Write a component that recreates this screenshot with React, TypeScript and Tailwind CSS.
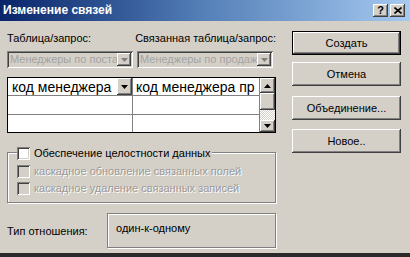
const raised =
  'shadow-[inset_-1px_-1px_#404040,inset_1px_1px_#ffffff,inset_-2px_-2px_#808080,inset_2px_2px_#d4d0c8]';
const sunken =
  'shadow-[inset_1px_1px_#808080,inset_-1px_-1px_#ffffff,inset_2px_2px_#404040,inset_-2px_-2px_#d4d0c8]';
const etched = 'border border-[#808080] shadow-[1px_1px_#ffffff,inset_1px_1px_#ffffff]';

function Arrow({ up = false, gray = false }: { up?: boolean; gray?: boolean }) {
  return (
    <svg width="7" height="4" viewBox="0 0 7 4" className={up ? 'rotate-180' : ''}>
      <path d="M0 0h7L3.5 4z" fill={gray ? '#808080' : '#000'} />
    </svg>
  );
}

function DropButton({ gray = false, className = '' }: { gray?: boolean; className?: string }) {
  return (
    <div className={`flex items-center justify-center bg-[#d4d0c8] ${raised} ${className}`}>
      <Arrow gray={gray} />
    </div>
  );
}

function Combo({ text, width }: { text: string; width: string }) {
  return (
    <div className={`flex h-[17px] ${width} p-[2px] bg-[#d4d0c8] ${sunken}`}>
      <div className="flex-1 overflow-hidden whitespace-nowrap pl-[1px] text-[11px] leading-[13px] text-[#a3a3a3]">
        {text}
      </div>
      <DropButton gray className="w-[14px] h-[13px]" />
    </div>
  );
}

function DialogButton({ label, isDefault = false }: { label: string; isDefault?: boolean }) {
  return (
    <div className={`h-[24px] ${isDefault ? 'border border-black' : ''}`}>
      <div className={`flex h-full items-center justify-center ${raised} text-[11px]`}>{label}</div>
    </div>
  );
}

function Check({ label, disabled = false }: { label: string; disabled?: boolean }) {
  return (
    <div className="flex items-center h-[14px] gap-[4px]">
      <div className={`w-[13px] h-[13px] shrink-0 ${disabled ? 'bg-[#d4d0c8]' : 'bg-white'} ${sunken}`} />
      <span
        className={`text-[11px] leading-[14px] whitespace-nowrap ${
          disabled ? 'text-[#9a9a9a] [text-shadow:1px_1px_#ffffff]' : 'text-black'
        }`}
      >
        {label}
      </span>
    </div>
  );
}

export default function App() {
  return (
    <div className="w-[410px] h-[257px] bg-[#d4d0c8] font-['Liberation_Sans',Arial,sans-serif] text-black flex flex-col overflow-hidden border-b-[4px] border-[#2a2a2a]">
      {/* title bar */}
      <div className="h-[21px] shrink-0 flex items-center justify-between pl-[3px] pr-[5px] bg-gradient-to-r from-[#0a246a] via-[#5580b8] to-[#a6caf0]">
        <span className="text-white font-bold text-[12px] leading-[15px]">Изменение связей</span>
        <div className="flex gap-[2px]">
          <div className={`w-[15px] h-[13px] bg-[#d4d0c8] ${raised} flex items-center justify-center text-[11px] font-bold leading-none`}>
            ?
          </div>
          <div className={`w-[15px] h-[13px] bg-[#d4d0c8] ${raised} flex items-center justify-center`}>
            <svg width="8" height="7" viewBox="0 0 8 7">
              <path d="M0.5 0.5l7 6M7.5 0.5l-7 6" stroke="#000" strokeWidth="1.6" />
            </svg>
          </div>
        </div>
      </div>

      <div className="flex flex-1 pl-[7px]">
        {/* left column */}
        <div className="w-[269px] flex flex-col">
          <div className="flex mt-[11px] h-[13px] text-[11px] leading-[13px] whitespace-nowrap">
            <span className="w-[129px]">Таблица/запрос:</span>
            <span>Связанная таблица/запрос:</span>
          </div>
          <div className="flex mt-[6px] gap-[4px]">
            <Combo text="Менеджеры по поставкам" width="w-[126px]" />
            <Combo text="Менеджеры по продажам" width="w-[136px]" />
          </div>

          {/* field grid */}
          <div className="mt-[9px] h-[56px] border border-black flex bg-white">
            <div className="flex-1 grid grid-cols-[125px_1fr] grid-rows-[18px_19px_17px] text-[14px] leading-[18px]">
              <div className="flex border-r border-b border-[#808080] pl-[4px]">
                <span className="flex-1 whitespace-nowrap overflow-hidden">код менеджера</span>
                <DropButton className="w-[15px] h-[17px]" />
              </div>
              <div className="border-b border-[#808080] pl-[3px] whitespace-nowrap overflow-hidden">код менеджера пр</div>
              <div className="border-r border-b border-[#808080]" />
              <div className="border-b border-[#808080]" />
              <div className="border-r border-[#808080]" />
              <div />
            </div>
            <div className="w-[16px] flex flex-col border-l border-[#808080]">
              <div className={`h-[15px] bg-[#d4d0c8] ${raised} flex items-center justify-center`}>
                <Arrow up />
              </div>
              <div className={`h-[17px] bg-[#d4d0c8] ${raised}`} />
              <div className="flex-1 bg-[repeating-conic-gradient(#d4d0c8_0_25%,#ffffff_0_50%)] bg-[length:2px_2px]" />
              <div className={`h-[12px] bg-[#d4d0c8] ${raised} flex items-center justify-center`}>
                <Arrow />
              </div>
            </div>
          </div>

          {/* integrity group */}
          <div className={`mt-[19px] h-[51px] ${etched} pl-[9px] flex flex-col`}>
            <div className="-mt-[7px] bg-[#d4d0c8] w-fit pr-[2px]">
              <Check label="Обеспечение целостности данных" />
            </div>
            <div className="mt-[4px]">
              <Check label="каскадное обновление связанных полей" disabled />
            </div>
            <div className="mt-[3px]">
              <Check label="каскадное удаление связанных записей" disabled />
            </div>
          </div>

          {/* relation type */}
          <div className="mt-[10px] flex items-center">
            <span className="w-[100px] text-[11px] pt-[1px]">Тип отношения:</span>
            <div className={`flex-1 h-[35px] ${etched} pl-[8px] pt-[7px] text-[11px] leading-[14px]`}>
              один-к-одному
            </div>
          </div>
        </div>

        {/* buttons */}
        <div className="ml-[16px] w-[109px] flex flex-col mt-[10px]">
          <DialogButton label="Создать" isDefault />
          <div className="mt-[7px]">
            <DialogButton label="Отмена" />
          </div>
          <div className="mt-[10px]">
            <DialogButton label="Объединение..." />
          </div>
          <div className="mt-[9px]">
            <DialogButton label="Новое.." />
          </div>
        </div>
      </div>
    </div>
  );
}
